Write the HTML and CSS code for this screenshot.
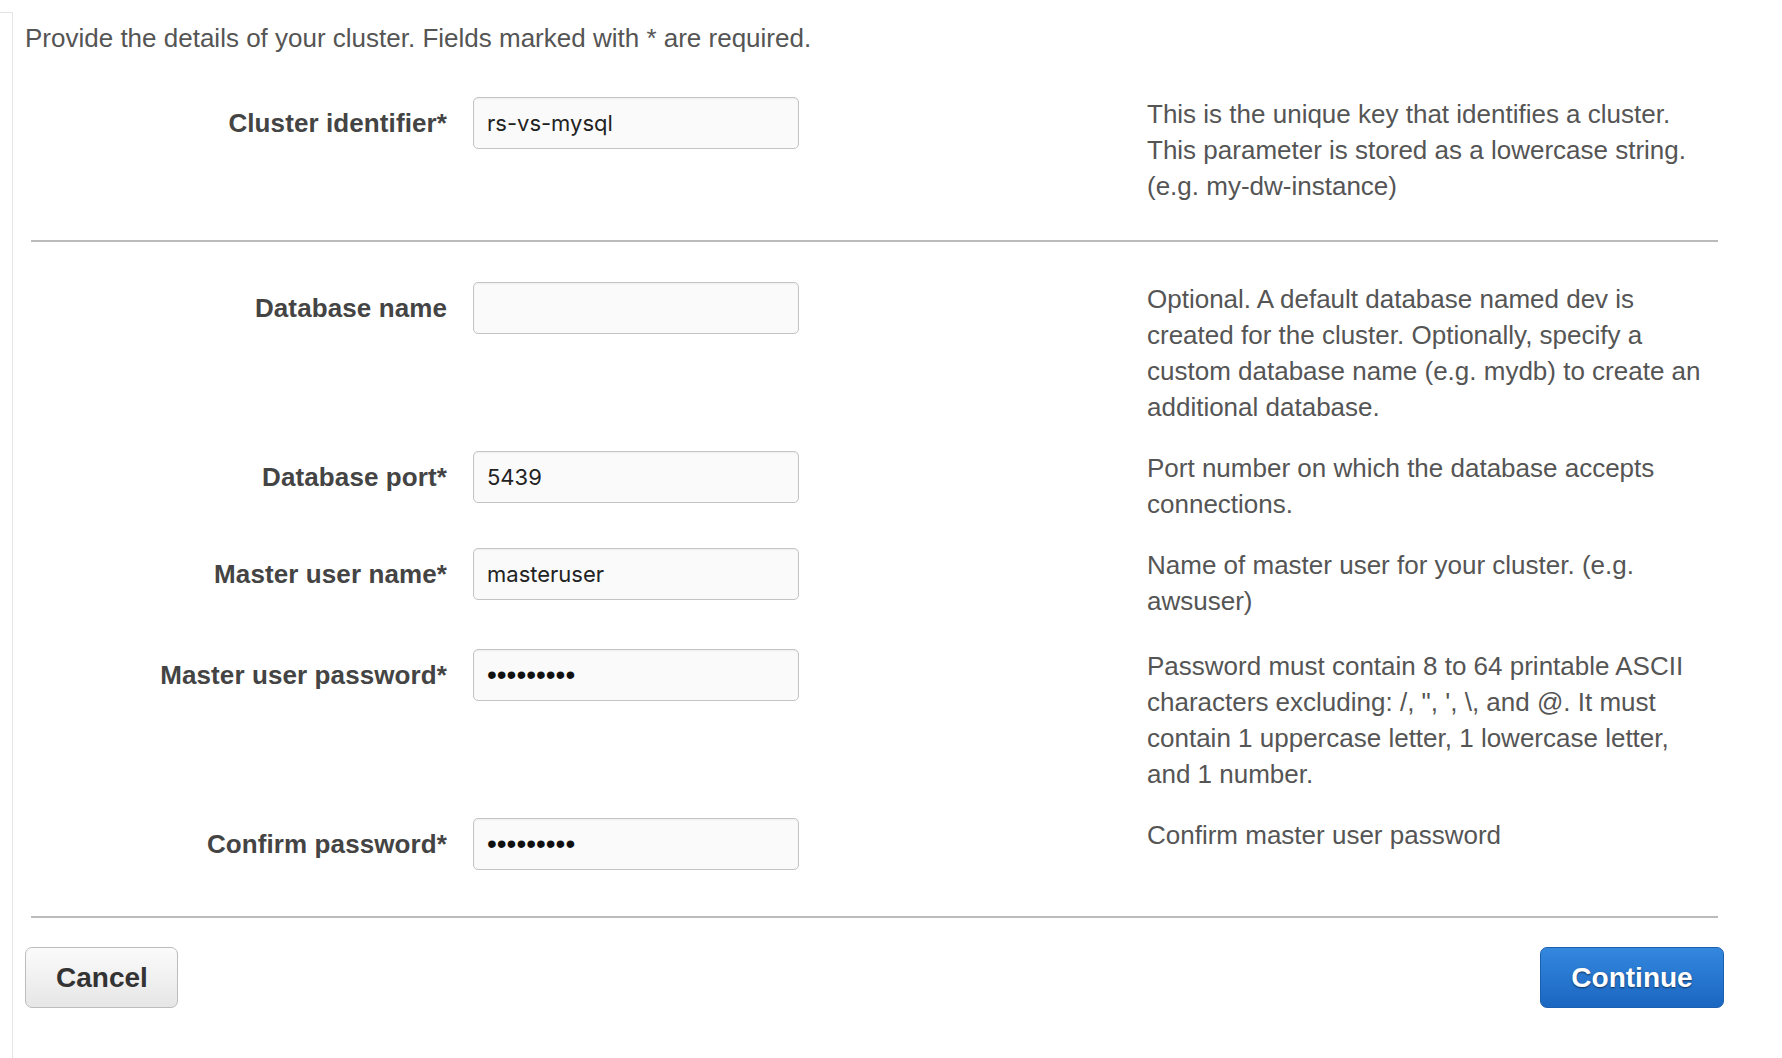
FILE: index.html
```html
<!DOCTYPE html>
<html lang="en">
<head>
<meta charset="utf-8">
<title>Cluster details</title>
<link rel="stylesheet" href="styles.css">
</head>
<body>
<div class="page">
  <div class="side"></div>
  <main class="main">
    <p class="intro">Provide the details of your cluster. Fields marked with * are required.</p>

    <div class="row row--first">
      <label class="label" for="cid">Cluster identifier*</label>
      <input class="input" id="cid" type="text" value="rs-vs-mysql">
      <div class="help">This is the unique key that identifies a cluster.<br>This parameter is stored as a lowercase string.<br>(e.g. my-dw-instance)</div>
    </div>

    <hr class="sep sep--top">

    <div class="row">
      <label class="label" for="dbn">Database name</label>
      <input class="input" id="dbn" type="text" value="">
      <div class="help">Optional. A default database named dev is<br>created for the cluster. Optionally, specify a<br>custom database name (e.g. mydb) to create an<br>additional database.</div>
    </div>

    <div class="row">
      <label class="label" for="dbp">Database port*</label>
      <input class="input" id="dbp" type="text" value="5439">
      <div class="help">Port number on which the database accepts<br>connections.</div>
    </div>

    <div class="row row--loose">
      <label class="label" for="mun">Master user name*</label>
      <input class="input" id="mun" type="text" value="masteruser">
      <div class="help">Name of master user for your cluster. (e.g.<br>awsuser)</div>
    </div>

    <div class="row">
      <label class="label" for="mup">Master user password*</label>
      <input class="input input--pw" id="mup" type="password" value="Abcdefgh1">
      <div class="help">Password must contain 8 to 64 printable ASCII<br>characters excluding: /, ", ', \, and @. It must<br>contain 1 uppercase letter, 1 lowercase letter,<br>and 1 number.</div>
    </div>

    <div class="row row--last">
      <label class="label" for="cpw">Confirm password*</label>
      <input class="input input--pw" id="cpw" type="password" value="Abcdefgh1">
      <div class="help">Confirm master user password</div>
    </div>

    <hr class="sep sep--bottom">

    <div class="actions">
      <button class="btn btn--cancel" type="button">Cancel</button>
      <button class="btn btn--primary" type="button">Continue</button>
    </div>
  </main>
</div>
</body>
</html>
```

FILE: styles.css
```css
* { box-sizing: border-box; }

html, body {
  margin: 0;
  padding: 0;
  background: #ffffff;
}

body {
  font-family: "Liberation Sans", Arial, Helvetica, sans-serif;
  color: #555555;
}

.page {
  display: flex;
  min-height: 100vh;
}

.side {
  flex: 0 0 13px;
  margin-top: 12px;
  border-top: 1px solid #e4e4e4;
  border-right: 1px solid #e4e4e4;
}

.main {
  flex: 0 0 1711px;
  padding: 20px 0 0 12px;
}

.intro {
  margin: 0;
  font-size: 26px;
  line-height: 36px;
  color: #555555;
}

.row {
  display: grid;
  grid-template-columns: 422px 326px 1fr;
  column-gap: 26px;
  align-items: start;
  margin-bottom: 26px;
}

.row--first {
  margin-top: 41px;
  margin-bottom: 0;
}

.row--loose {
  margin-bottom: 30px;
}

.row--last {
  margin-bottom: 0;
}

.label {
  height: 52px;
  display: flex;
  align-items: center;
  justify-content: flex-end;
  font-size: 26px;
  font-weight: bold;
  letter-spacing: 0.1px;
  color: #444444;
  white-space: nowrap;
}

.input {
  width: 326px;
  height: 52px;
  margin: 0;
  padding: 0 13px;
  border: 1px solid #c4c4c4;
  border-radius: 5px;
  background: #fafafa;
  box-shadow: inset 0 1px 2px rgba(0, 0, 0, 0.05);
  font-family: Inter, "Noto Sans", sans-serif;
  font-size: 22px;
  color: #222222;
  outline: none;
}

.input--pw {
  font-family: "Liberation Sans", Arial, sans-serif;
  font-size: 28px;
  color: #111111;
  letter-spacing: 0;
}

.help {
  margin-left: 322px;
  font-size: 26px;
  line-height: 36px;
  color: #555555;
  white-space: nowrap;
  margin-top: -1px;
}

.sep {
  margin: 0 6px;
  height: 2px;
  border: 0;
  background: #bbbbbb;
}

.sep--top {
  margin-top: 36px;
  margin-bottom: 40px;
}

.sep--bottom {
  margin-top: 46px;
  margin-bottom: 29px;
}

.actions {
  display: flex;
  justify-content: space-between;
  align-items: center;
}

.btn {
  height: 61px;
  padding: 0 30px;
  border-radius: 7px;
  font-family: "Liberation Sans", Arial, Helvetica, sans-serif;
  font-size: 28px;
  font-weight: bold;
  cursor: pointer;
}

.btn--cancel {
  width: 153px;
  border: 1px solid #bcbcbc;
  background: linear-gradient(#fbfbfb, #e6e6e6);
  color: #333333;
}

.btn--primary {
  width: 184px;
  border: 1px solid #1b5fb1;
  background: linear-gradient(#3488de, #1a66c1);
  color: #ffffff;
  text-shadow: 0 1px 2px rgba(0, 0, 0, 0.55);
}
```
